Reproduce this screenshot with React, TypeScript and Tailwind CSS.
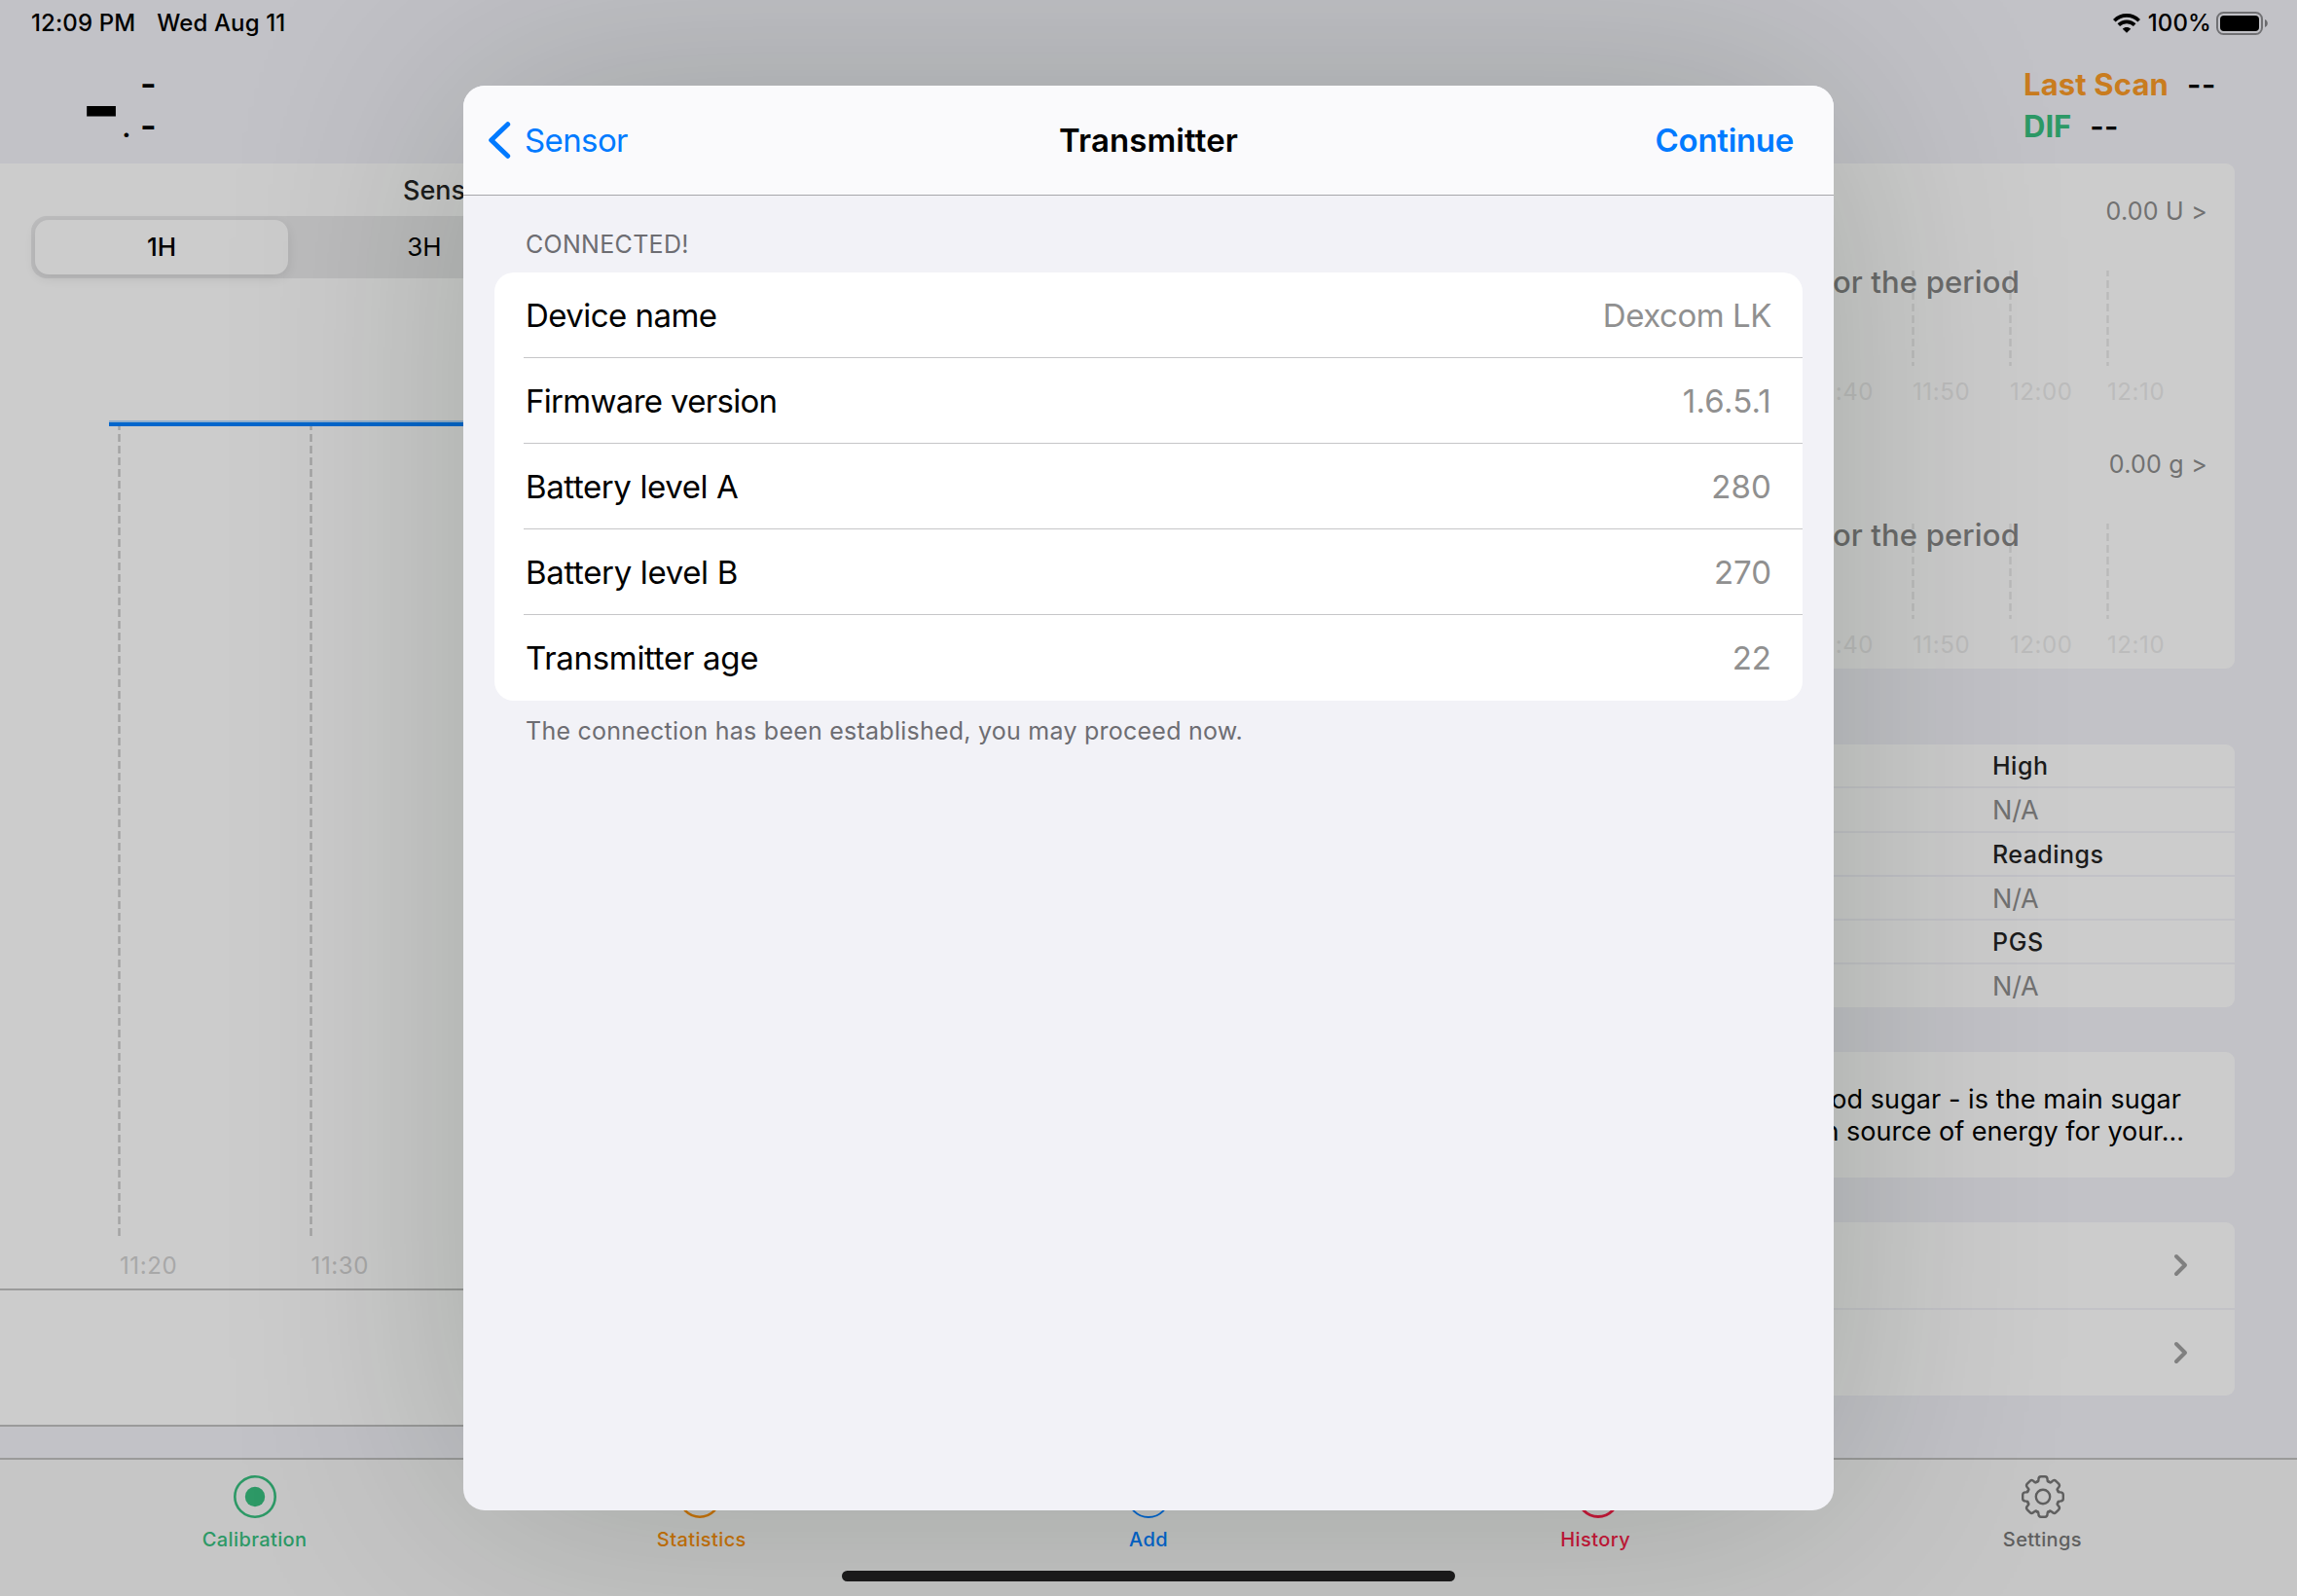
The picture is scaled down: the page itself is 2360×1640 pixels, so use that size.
import React from "react";

function BatteryIcon() {
  return (
    <svg width="54" height="24" viewBox="0 0 54 24" className="block shrink-0">
      <rect x="1" y="1" width="46" height="22" rx="6.5" fill="none" stroke="#000" strokeOpacity="0.42" strokeWidth="2" />
      <rect x="4" y="4" width="40" height="16" rx="4" fill="#000" />
      <path d="M50 8c1.700.6 2.800 2.200 2.800 4s-1.100 3.400-2.800 4z" fill="#000" fillOpacity="0.45" />
    </svg>
  );
}

function WifiIcon() {
  return (
    <svg width="28" height="20" viewBox="0 0 28 20" className="block shrink-0">
      <g fill="none" stroke="#000" strokeWidth="3.7">
        <path d="M1.300 7.200C4.700 3.800 9.100 1.900 14 1.900s9.300 1.900 12.700 5.300" />
        <path d="M5.800 11.700C8 9.600 10.800 8.400 14 8.400s6 1.200 8.200 3.300" />
      </g>
      <path d="M14 19.800l-4.200-4.100c1.100-1.100 2.500-1.700 4.200-1.700s3.100.6 4.200 1.700z" fill="#000" />
    </svg>
  );
}

function StatusBar() {
  return (
    <div className="flex h-12 shrink-0 items-center justify-between pl-8 pr-[29px] text-[24px] leading-[48px] font-medium text-black">
      <div className="flex gap-[22px]">
        <span className="tracking-[0.1px]">12:09 PM</span>
        <span className="tracking-[0.15px]">Wed Aug 11</span>
      </div>
      <div className="flex items-center">
        <WifiIcon />
        <span className="ml-[8px] mr-[5px] tracking-[0.1px]">100%</span>
        <BatteryIcon />
      </div>
    </div>
  );
}

function GlucoseHeader() {
  return (
    <div className="flex h-[120px] shrink-0 justify-between">
      <div className="flex pl-[83px] text-black">
        <span className="h-[120px] w-[42px] text-[90px] leading-[122px] font-bold">-</span>
        <span className="mt-[62px] w-[19px] text-[32px] leading-[40px] font-medium">.</span>
        <span className="mt-[17px] flex flex-col text-[36px] leading-[43px] font-semibold">
          <span>-</span>
          <span>-</span>
        </span>
      </div>
      <div className="flex w-[281px] flex-col pt-[17px] text-[31px] leading-[43px] font-bold">
        <div className="flex gap-[19px]">
          <span className="tracking-[0.15px] text-[#c97c1f]">Last Scan</span>
          <span className="font-semibold tracking-[0.4px] text-black">--</span>
        </div>
        <div className="flex gap-[19px]">
          <span className="text-[#2d9966]">DIF</span>
          <span className="font-semibold tracking-[0.4px] text-black">--</span>
        </div>
      </div>
    </div>
  );
}

const ranges = ["1H", "3H"];

function GridLine({ height, offset, color }: { height: number; offset: number; color: string }) {
  return (
    <svg width="3" height={height} className="block">
      <line
        x1="1.500"
        y1="0"
        x2="1.500"
        y2={height}
        stroke={color}
        strokeWidth="2.400"
        strokeDasharray="8 4"
        strokeDashoffset={offset}
      />
    </svg>
  );
}

function SensorPanel() {
  return (
    <section className="flex w-[1148px] shrink-0 flex-col">
      <div className="h-[1156px] shrink-0 bg-[#cccccc] pt-[10px]">
        <div className="h-[44px] pl-[414px] text-[27px] leading-[36px] font-medium text-[#1c1c1c]">Sensor</div>
        <div className="ml-8 flex h-16 w-[1084px] rounded-2xl bg-[#bcbcbd] p-1">
          {ranges.map((r, i) => (
            <div key={r} className="flex w-[270px] shrink-0">
              <span
                className={
                  i === 0
                    ? "h-14 w-[260px] rounded-[14px] bg-[#cccccc] text-center text-[26px] leading-[56px] font-medium text-black shadow-[0_4px_12px_rgba(0,0,0,0.09)]"
                    : "h-14 w-[260px] text-center text-[26px] leading-[56px] text-black"
                }
              >
                {r}
              </span>
            </div>
          ))}
        </div>
        <div className="ml-[112px] mt-[146px] h-[6px] border-t-2 border-[#8fadcc] bg-[#0066cc]" />
        <div className="ml-[121px] flex">
          {["11:20", "11:30"].map((t) => (
            <div key={t} className="w-[196.6px] shrink-0">
              <GridLine height={832} offset={4} color="#a3a3a3" />
              <div className="pl-[2px] pt-[13px] text-[24px] leading-[36px] tracking-[0.6px] text-[#a8a8a8]">{t}</div>
            </div>
          ))}
        </div>
      </div>
      <div className="h-[142px] shrink-0 border-y-2 border-[#9a9a9a] bg-[#cccccc]" />
    </section>
  );
}

function PeriodChart({ value, cls }: { value: string; cls: string }) {
  return (
    <div className={cls}>
      <div className="pr-[28px] text-right text-[25px] leading-[32px] tracking-[0.25px] text-[#717171]">{value}</div>
      <div className="mt-[45px] flex h-[98px] justify-end">
        {["a", "b", "c", "d"].map((k) => (
          <div key={k} className="w-[100px]">
            <GridLine height={98} offset={2} color="#bababa" />
          </div>
        ))}
        <div className="w-[32px]" />
      </div>
      <div className="-mt-[98px] h-[98px] pr-[221px] text-right text-[31px] leading-[24px] font-medium tracking-[0.15px] text-[#6b6b6b]">
        No data for the period
      </div>
      <div className="mt-[9px] flex justify-end text-[24px] leading-[36px] tracking-[0.6px] text-[#bcbcbc]">
        {["11:40", "11:50", "12:00", "12:10"].map((t) => (
          <span key={t} className="w-[100px] pl-[1px]">
            {t}
          </span>
        ))}
        <span className="w-[32px]" />
      </div>
    </div>
  );
}

const stats = [
  { text: "High", cls: "h-[43px] text-[25px] leading-[45px] font-medium tracking-[0.5px] text-[#1c1c1c]" },
  { text: "N/A", cls: "h-[44px] text-[27px] leading-[45px] tracking-[-0.2px] text-[#717171]" },
  { text: "Readings", cls: "h-[43px] text-[25px] leading-[45px] font-medium tracking-[0.45px] text-[#1c1c1c]" },
  { text: "N/A", cls: "h-[43px] text-[27px] leading-[45px] tracking-[-0.2px] text-[#717171]" },
  { text: "PGS", cls: "h-[43px] text-[25px] leading-[45px] font-medium tracking-[0.6px] text-[#1c1c1c]" },
  { text: "N/A", cls: "h-[44px] text-[27px] leading-[45px] tracking-[-0.2px] text-[#717171]" },
];

function SummaryPanel() {
  return (
    <section className="mr-16 flex w-[1084px] shrink-0 flex-col">
      <div className="h-[519px] rounded-[9px] bg-[#cccccc]">
        <PeriodChart value="0.00 U >" cls="h-[260px] pt-[33px]" />
        <PeriodChart value="0.00 g >" cls="h-[259px] pt-[33px]" />
      </div>
      <div className="mt-[78px] flex h-[270px] flex-col gap-[2px] overflow-hidden rounded-[9px]">
        {stats.map((s, i) => (
          <div key={i} className={`shrink-0 bg-[#cccccc] pl-[835px] ${s.cls}`}>
            {s.text}
          </div>
        ))}
      </div>
      <div className="mt-[46px] flex h-[129px] flex-col rounded-[9px] bg-[#cccccc] pt-[32px] text-right text-[27px] leading-[33px] text-black">
        <div className="pr-[55px] tracking-[0.08px]">Glucose - or blood sugar - is the main sugar</div>
        <div className="pr-[52px]">found in your blood. It is the main source of energy for your...</div>
      </div>
      <div className="mt-[46px] flex h-[178px] flex-col gap-[2px] overflow-hidden rounded-[9px]">
        {[0, 1].map((i) => (
          <div key={i} className="flex h-[88px] items-center justify-end bg-[#cccccc] pr-[48px]">
            <svg width="15" height="24" viewBox="0 0 15 24" className="block">
              <path d="M3 3l9 9-9 9" fill="none" stroke="#808080" strokeWidth="4" strokeLinecap="round" strokeLinejoin="round" />
            </svg>
          </div>
        ))}
      </div>
    </section>
  );
}

function GearIcon() {
  const tooth =
    "M-6.300-15.400C-4.800-14.900-4.600-16.200-4.600-17.600C-4.600-20-3.700-20.800-2-20.800H2C3.700-20.800 4.600-20 4.600-17.600C4.600-16.200 4.800-14.900 6.300-15.400";
  return (
    <svg width="44" height="44" viewBox="-22 -22 44 44" className="block">
      <g fill="none" stroke="#5f5f5f" strokeWidth="2.400" strokeLinecap="round">
        {[0, 45, 90, 135, 180, 225, 270, 315].map((a) => (
          <path key={a} d={tooth} transform={`rotate(${a})`} />
        ))}
        <circle r="7.200" />
      </g>
    </svg>
  );
}

function RingIcon({ color, dot, width }: { color: string; dot: boolean; width: number }) {
  return (
    <svg width="44" height="44" viewBox="0 0 44 44" className="block">
      <circle cx="22" cy="22" r={22 - width / 2} fill="none" stroke={color} strokeWidth={width} />
      {dot && <circle cx="22" cy="22" r="10.200" fill={color} />}
    </svg>
  );
}

const tabs = [
  { label: "Calibration", color: "#2d9966", cls: "text-[#2d9966]", icon: "", width: 2.6 },
  { label: "Statistics", color: "#c9730a", cls: "text-[#c9730a]", icon: "mr-[4px]", width: 2.6 },
  { label: "Add", color: "#0065d0", cls: "text-[#0065d0]", icon: "", width: 2 },
  { label: "History", color: "#c9183a", cls: "text-[#c9183a]", icon: "ml-[6px]", width: 3 },
  { label: "Settings", color: "#5f5f5f", cls: "text-[#5f5f5f]", icon: "ml-[2px]", width: 2.4 },
];

function TabBar() {
  return (
    <nav className="flex h-[142px] shrink-0 border-t-2 border-[#9a9a9a] bg-[#c6c6c6] px-8 pt-4">
      {tabs.map((t) => (
        <div key={t.label} className="flex flex-1 flex-col items-center">
          <div className={t.icon}>
            {t.label === "Settings" ? (
              <GearIcon />
            ) : (
              <RingIcon color={t.color} dot={t.label === "Calibration"} width={t.width} />
            )}
          </div>
          <span className={`mt-[10px] text-[20px] leading-[24px] font-medium tracking-[0.4px] ${t.cls}`}>{t.label}</span>
        </div>
      ))}
    </nav>
  );
}

const details = [
  { label: "Device name", labelCls: "tracking-[-0.55px]", value: "Dexcom LK", valueCls: "tracking-[-0.45px]" },
  { label: "Firmware version", labelCls: "tracking-[-0.7px]", value: "1.6.5.1", valueCls: "tracking-[0.2px]" },
  { label: "Battery level A", labelCls: "tracking-[-0.4px]", value: "280", valueCls: "tracking-[0.1px]" },
  { label: "Battery level B", labelCls: "tracking-[-0.35px]", value: "270", valueCls: "tracking-[0px]" },
  { label: "Transmitter age", labelCls: "tracking-[-0.3px]", value: "22", valueCls: "tracking-[0px]" },
];

function TransmitterSheet() {
  return (
    <div className="absolute left-[476px] top-[88px] flex h-[1464px] w-[1408px] flex-col rounded-[22px] bg-[#f2f2f7] shadow-[0_0_250px_rgba(0,25,8,0.2)]">
      <header className="grid h-[113px] shrink-0 grid-cols-3 items-center rounded-t-[22px] border-b border-[#a7a7aa] bg-[#fafafc] text-[33px] text-[#007aff]">
        <div className="flex items-center pl-6">
          <svg width="26" height="40" viewBox="0 0 26 40" className="block">
            <path d="M21.700 3.700L4.700 20l17 16.300" fill="none" stroke="#007aff" strokeWidth="5" strokeLinecap="round" strokeLinejoin="round" />
          </svg>
          <span className="ml-[13px] pt-[2px] tracking-[-0.6px]">Sensor</span>
        </div>
        <h1 className="pt-[2px] text-center font-semibold tracking-[0.1px] text-black">Transmitter</h1>
        <div className="pr-[41px] pt-[2px] text-right font-semibold tracking-[-0.3px]">Continue</div>
      </header>
      <div className="h-[79px] shrink-0 pl-[64px] pt-[34px] text-[25px] leading-[32px] tracking-[0.3px] text-[#6d6d72]">CONNECTED!</div>
      <div className="mx-8 h-[440px] shrink-0 rounded-[20px] bg-white">
        {details.map((d, i) => (
          <div key={d.label} className="h-[88px] pl-[30px]">
            <div
              className={
                i < details.length - 1
                  ? "flex h-[88px] items-center justify-between border-b border-[#c6c6c8] pl-[2px] pr-8 pt-[2px] text-[33px]"
                  : "flex h-[88px] items-center justify-between pl-[2px] pr-8 pt-[2px] text-[33px]"
              }
            >
              <span className={`text-black ${d.labelCls}`}>{d.label}</span>
              <span className={`text-[#909090] ${d.valueCls}`}>{d.value}</span>
            </div>
          </div>
        ))}
      </div>
      <p className="pl-[64px] pt-[15px] text-[25px] leading-[32px] tracking-[0.24px] text-[#6d6d72]">
        The connection has been established, you may proceed now.
      </p>
    </div>
  );
}

export default function App() {
  return (
    <div className="relative flex h-[1640px] w-[2360px] flex-col overflow-hidden bg-[#c2c2c7] font-['Inter',sans-serif]">
      <StatusBar />
      <GlucoseHeader />
      <main className="flex h-[1330px] shrink-0 justify-between">
        <SensorPanel />
        <SummaryPanel />
      </main>
      <TabBar />
      <TransmitterSheet />
      <div className="absolute left-[865px] top-[1614px] h-[11px] w-[630px] rounded-full bg-[#1a1a1a]" />
    </div>
  );
}
